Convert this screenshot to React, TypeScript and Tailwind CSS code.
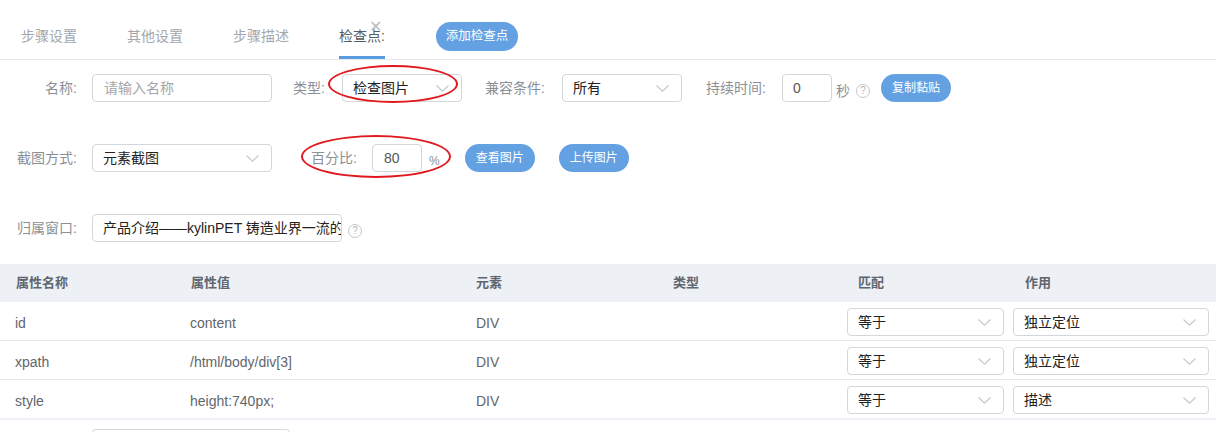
import React from "react";

const Chevron = () => (
  <svg width="13" height="7" viewBox="0 0 13 7">
    <polyline points="0.5,0.5 6.5,6.2 12.5,0.5" fill="none" stroke="#c3c7cc" strokeWidth="1.1" />
  </svg>
);

const Help = () => (
  <span className="flex h-[14px] w-[14px] items-center justify-center rounded-full border border-[#c3c7cc] text-[10px] leading-none text-[#b4b8bd]">
    ?
  </span>
);

const Select = ({ value, className }: { value: string; className: string }) => (
  <div
    className={`flex h-[28px] shrink-0 items-center justify-between rounded-[4px] border border-[#d3d7dc] bg-white pl-[10px] pr-[12px] text-[14px] text-[#222] ${className}`}
  >
    <span>{value}</span>
    <Chevron />
  </div>
);

const Button = ({ text, className }: { text: string; className: string }) => (
  <button className={`flex h-[28px] w-[70px] shrink-0 items-center justify-center rounded-full bg-[#64a1e3] text-[12px] text-white ${className}`}>
    {text}
  </button>
);

const rows = [
  { name: "id", value: "content", el: "DIV", match: "等于", act: "独立定位" },
  { name: "xpath", value: "/html/body/div[3]", el: "DIV", match: "等于", act: "独立定位" },
  { name: "style", value: "height:740px;", el: "DIV", match: "等于", act: "描述" },
];

export default function App() {
  return (
    <div className="h-[432px] w-[1216px] overflow-hidden bg-white font-['Liberation_Sans','Noto_Sans_CJK_SC',sans-serif]">
      {/* 顶部标签栏 */}
      <div className="flex h-[60px] border-b border-[#e6e8eb] pl-[21px]">
        {["步骤设置", "其他设置", "步骤描述"].map((t) => (
          <div key={t} className="mr-[50px] flex h-full items-center border-b-[3px] border-transparent pt-[16px] text-[14px] text-[#a3a7ac]">
            {t}
          </div>
        ))}
        <div className="relative flex h-full items-center border-b-[3px] border-[#5b9be0] pt-[16px] text-[14px] text-[#555c64]">
          检查点:
          <span className="absolute left-[30px] top-[19px] text-[16px] leading-none text-[#b8bcc1]">✕</span>
        </div>
        <button className="ml-[51px] mt-[22px] flex h-[29px] w-[82px] items-center justify-center rounded-full bg-[#64a1e3] text-[12.5px] text-white">
          添加检查点
        </button>
      </div>

      {/* 表单 */}
      <div className="pt-[14px] text-[14px] text-[#8c9096]">
        <div className="relative flex h-[28px] items-center">
          <span className="w-[77px] text-right">名称:</span>
          <div className="ml-[15px] flex h-[28px] w-[180px] items-center rounded-[4px] border border-[#d3d7dc] pl-[11px] text-[#a3a6aa]">
            请输入名称
          </div>
          <span className="ml-[21px] w-[32px] whitespace-nowrap">类型:</span>
          <Select value="检查图片" className="ml-[17px] w-[120px]" />
          <span className="ml-[23px] w-[61px] whitespace-nowrap">兼容条件:</span>
          <Select value="所有" className="ml-[16px] w-[120px]" />
          <span className="ml-[24px] w-[61px] whitespace-nowrap">持续时间:</span>
          <div className="ml-[15px] flex h-[28px] w-[50px] items-center rounded-[4px] border border-[#d3d7dc] pl-[10px] text-[#555]">0</div>
          <span className="ml-[4px] mt-[6px]">秒</span>
          <span className="ml-[6px] mt-[6px]">
            <Help />
          </span>
          <Button text="复制黏贴" className="ml-[11px]" />
          <div className="absolute left-[328px] top-[-9px] h-[38px] w-[130px] rounded-[50%] border-2 border-[#e1191e]" />
        </div>

        <div className="relative mt-[42px] flex h-[28px] items-center">
          <span className="w-[77px] text-right">截图方式:</span>
          <Select value="元素截图" className="ml-[15px] w-[180px]" />
          <span className="ml-[39px] w-[46px] whitespace-nowrap">百分比:</span>
          <div className="ml-[15px] flex h-[28px] w-[50px] items-center rounded-[4px] border border-[#d3d7dc] pl-[11px] text-[#555]">80</div>
          <span className="ml-[7px] mt-[6px] text-[12px]">%</span>
          <Button text="查看图片" className="ml-[25px]" />
          <Button text="上传图片" className="ml-[24px]" />
          <div className="absolute left-[301px] top-[-9px] h-[43px] w-[150px] rounded-[50%] border-2 border-[#e1191e]" />
        </div>

        <div className="mt-[42px] flex h-[28px] items-center">
          <span className="w-[77px] text-right">归属窗口:</span>
          <div className="ml-[15px] flex h-[28px] w-[250px] items-center overflow-hidden whitespace-nowrap rounded-[4px] border border-[#d3d7dc] pl-[10px] text-[#222]">
            产品介绍——kylinPET 铸造业界一流的 PET 产品
          </div>
          <span className="ml-[6px] mt-[6px]">
            <Help />
          </span>
        </div>
      </div>

      {/* 属性表格 */}
      <div className="mt-[22px] text-[14px]">
        <div className="grid h-[38px] grid-cols-[175px_285px_197px_185px_167px_1fr] items-center bg-[#edf1f5] text-[13px] font-bold text-[#5f6670]">
          <span className="pl-[16px]">属性名称</span>
          <span className="pl-[16px]">属性值</span>
          <span className="pl-[16px]">元素</span>
          <span className="pl-[16px]">类型</span>
          <span className="pl-[16px]">匹配</span>
          <span className="pl-[16px]">作用</span>
        </div>
        {rows.map((r, i) => (
          <div
            key={r.name}
            className={`grid h-[39px] grid-cols-[175px_285px_197px_185px_167px_1fr] items-center text-[#62666c] ${
              i === rows.length - 1 ? "h-[40px] border-b-2 border-[#edf1f5]" : "border-b border-[#e7ebef]"
            }`}
          >
            <span className="pl-[15px] pt-[5px]">{r.name}</span>
            <span className="pl-[15px] pt-[5px]">{r.value}</span>
            <span className="pl-[16px] pt-[5px]">{r.el}</span>
            <span />
            <div className="pl-[5px] pt-[2px]">
              <Select value={r.match} className="w-[157px]" />
            </div>
            <div className="pl-[4px] pt-[2px]">
              <Select value={r.act} className="w-[196px]" />
            </div>
          </div>
        ))}
      </div>

      <div className="mt-[9px] flex">
        <div className="ml-[92px] h-[28px] w-[198px] rounded-[4px] border border-[#d3d7dc]" />
      </div>
    </div>
  );
}
